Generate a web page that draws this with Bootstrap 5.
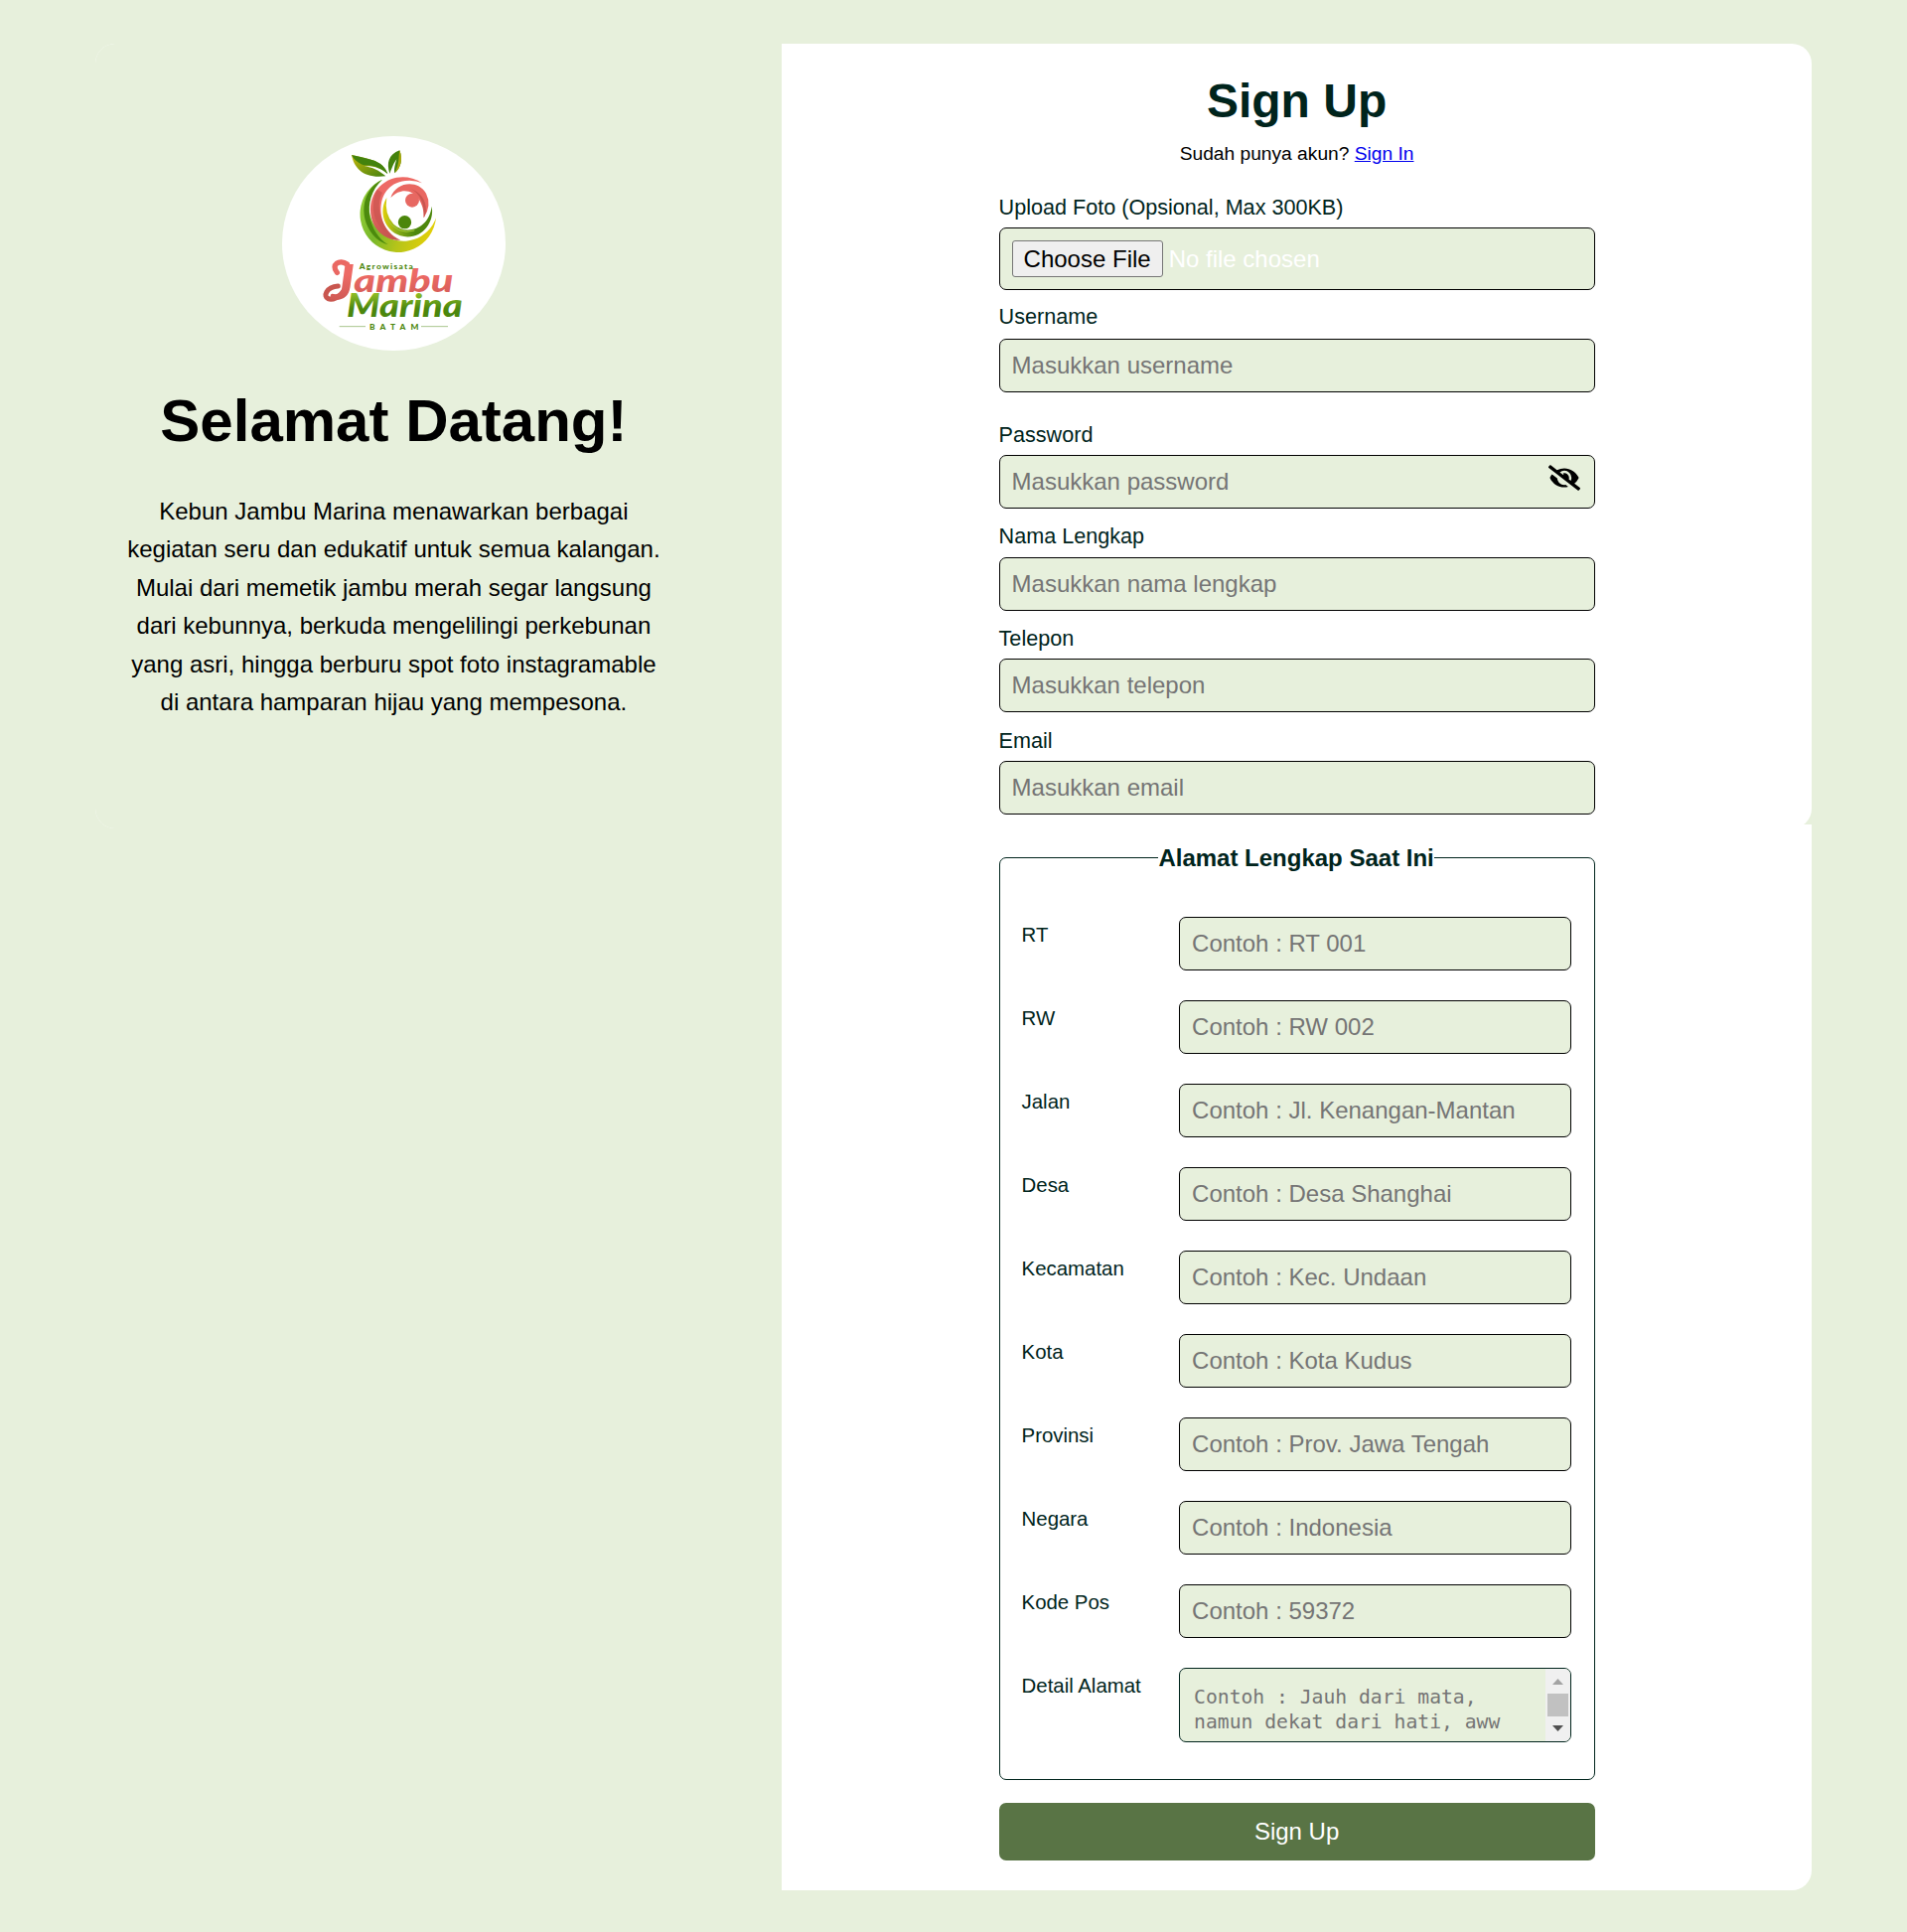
<!DOCTYPE html>
<html lang="id">
<head>
<meta charset="utf-8">
<meta name="viewport" content="width=device-width, initial-scale=1">
<title>Sign Up</title>
<link href="https://cdn.jsdelivr.net/npm/bootstrap@5.3.0/dist/css/bootstrap.min.css" rel="stylesheet">
<style>
  :root { --leaf: #e7f0dc; --ink: #00241c; }
  body { background: var(--leaf); font-family: "Liberation Sans", Arial, sans-serif; color: #000; line-height: 1.15; padding: 44px 0 41px; }
  .signup-shell { width: 1728px; }
  .welcome-frame { width: 691.2px; height: 789.5px; border-radius: 20px 0 0 20px; }
  .welcome { height: 100%; background: var(--leaf); border-radius: 20px 0 0 20px; padding: 93px 90.4px 0 0; }
  .welcome h1 { font-size: 60px; line-height: 70px; margin: 36px 0 37px; }
  .welcome p { font-size: 24px; line-height: 38.4px; white-space: nowrap; }
  .form-side { width: 1036.8px; }
  .account { height: 789.5px; margin-bottom: -3.5px; padding: 30px 218.4px 0; border-radius: 0 20px 20px 0; }
  .address { padding: 19px 218.4px 30.5px; border-radius: 0 0 20px 0; }
  .account h2 { font-size: 48px; line-height: 56px; color: var(--ink); }
  .login-hint { font-size: 19.2px; line-height: 22px; margin: 14px 0 30px; }
  .login-hint a { color: #00e; }
  .account .form-label { font-size: 21.6px; line-height: 25px; height: 25px; color: var(--ink); margin: 0 0 8.27px; }
  .field { margin-bottom: 15.4px; }
  .field-upload { margin-bottom: 14px; }
  .field-username { margin-bottom: 30px; }
  .account .field-username .form-label { margin-bottom: 9.5px; }
  .field-input, .field-input:focus { height: 54px; padding: 12px; font-size: 24px; line-height: 28px; background: var(--leaf); border: 1px solid #000; border-radius: 7px; }
  .field-input::placeholder, .detail-input::placeholder { color: #757575; opacity: 1; }
  .file-field { height: 63px; padding: 0 12px; background: var(--leaf); border: 1px solid #000; border-radius: 7px; font-size: 24px; gap: 6px; }
  .choose { height: 37px; padding: 1px 11px 0; background: #efefef; border: 1px solid #767676; border-radius: 3px; font-size: 24px; line-height: 34px; color: #000; }
  .eye { right: 15px; top: 10px; width: 32px; height: 26px; }
  .address fieldset { height: 942.5px; border: 1px solid var(--ink); border-radius: 7px; padding: 46px 23px 0 22px; }
  .address legend { float: none; width: auto; margin: 0 auto; padding: 2px 0 0; font-size: 24px; line-height: 26px; font-weight: 700; color: var(--ink); }
  .address-row { min-height: 54px; margin-bottom: 30px; }
  .address-row label { width: 158.5px; padding-top: 6px; font-size: 20.4px; line-height: 24px; color: var(--ink); }
  .detail-box { height: 75px; border: 1px solid var(--ink); border-radius: 7px; background: var(--leaf); overflow: hidden; }
  .detail-input { resize: none; border: 0; background: transparent; padding: 16px 0 0 14px; font-family: "DejaVu Sans Mono", monospace; font-size: 19.7px; line-height: 25px; overflow: hidden; outline: 0; }
  .submit { height: 58px; margin-top: 23px; background: #597445; border: 0; border-radius: 7px; font-size: 24px; color: #fff; }
</style>
</head>
<body>
<main class="signup-shell d-flex align-items-start mx-auto">
  <div class="welcome-frame bg-white">
  <section class="welcome text-center">
    <svg class="d-block mx-auto" width="225" height="216" viewBox="42 36 675 648">
      <defs>
        <linearGradient id="rim" x1="0" y1=".3" x2="1" y2=".6"><stop offset="0" stop-color="#91cc35"/><stop offset=".3" stop-color="#78b82a"/><stop offset=".6" stop-color="#b4c41a"/><stop offset="1" stop-color="#e3cf08"/></linearGradient>
        <linearGradient id="rose" x1="0" y1="0" x2="0" y2="1"><stop offset=".4" stop-color="#ed6a65"/><stop offset="1" stop-color="#c4544e"/></linearGradient>
        <linearGradient id="bowl" x1="0" y1="0" x2="1" y2="0"><stop offset="0" stop-color="#e3cf08"/><stop offset=".3" stop-color="#86ab18"/><stop offset=".65" stop-color="#4d870c"/></linearGradient>
        <linearGradient id="grass" x1="0" y1="0" x2="0" y2="1"><stop offset=".15" stop-color="#99c52b"/><stop offset=".6" stop-color="#4b870d"/></linearGradient>
        <linearGradient id="leafTone" x1="0" y1="0" x2="1" y2="1"><stop offset="0" stop-color="#c5b70b"/><stop offset="1" stop-color="#3f8010"/></linearGradient>
      </defs>
      <ellipse cx="379.5" cy="360" rx="337.5" ry="324" fill="#fff"/>
      <path fill="url(#leafTone)" d="M252 93C260 135 290 165 355 157C335 140 315 130 290 127C318 125 340 132 361 150C347 110 310 106 252 93Z"/>
      <path fill="#43820d" d="M252 93C310 106 347 110 361 150C337 130 318 123 290 124C275 119 260 109 252 93Z"/>
      <path fill="#43820d" d="M397 79C363 92 357 118 367 149C372 138 376 123 388 106C382 126 380 137 382 148C400 133 408 108 397 79Z"/>
      <path fill="#aaa80c" d="M397 79C393 99 398 119 382 148C400 133 408 108 397 79Z"/>
      <path fill="url(#rim)" d="M345 167A115 115 0 1 0 507 283A104 104 0 1 1 345 167Z"/>
      <path fill="#4c8a0d" d="M345 167C279 199 270 290 326 344Q343 359 362 363C307 332 276 232 345 167Z"/>
      <path fill="url(#rose)" d="M465 178C397 133 309 177 309 257C309 319 356 353 400 350C324 324 313 183 414 171Q443 168 465 178Z"/>
      <path fill="#c95650" opacity=".75" d="M330 197C303 240 315 330 400 350C346 326 320 255 345 207Z"/>
      <path fill="#e96761" d="M370 222C386 172 453 167 477 209Q495 244 470 283C474 225 421 171 370 222Z"/>
      <path fill="#c95650" d="M431 195C458 206 478 226 477 263Q474 276 470 283C473 239 458 209 431 195Z"/>
      <path fill="url(#bowl)" d="M358 222C332 265 351 320 399 337C457 354 504 302 494 248C487 314 419 339 379 302Q350 272 358 222Z"/>
      <path fill="none" stroke="#a6cc38" stroke-width="3" d="M356 284Q391 337 442 321"/>
      <circle cx="435" cy="230" r="21" fill="#e76862"/>
      <circle cx="412.500" cy="296" r="20" fill="#4b860a"/>
      <g font-family="Lato, sans-serif" font-style="italic" font-weight="900">
        <path d="M208 448C188 424 216 407 238 423" fill="none" stroke="#ea6863" stroke-width="16" stroke-linecap="round"/>
        <path d="M211 489C174 492 166 521 181 527C194 532 215 523 227 505" fill="none" stroke="#c9564f" stroke-width="15" stroke-linecap="round"/>
        <text fill="url(#rose)"><tspan x="190" y="530" font-size="150" textLength="70" lengthAdjust="spacingAndGlyphs">J</tspan><tspan x="259" y="508" font-size="98" textLength="300" lengthAdjust="spacingAndGlyphs">ambu</tspan></text>
        <text x="237" y="583" font-size="96" textLength="350" lengthAdjust="spacingAndGlyphs" fill="url(#grass)">Marina</text>
      </g>
      <text x="275" y="437" font-family="Lato, sans-serif" font-size="25" font-weight="900" textLength="162" fill="#4b860a">Agrowisata</text>
      <path d="M215 611H294M462 611H543" stroke="#a9c58c" stroke-width="3"/>
      <text x="306" y="621" font-family="Lato, sans-serif" font-size="25" font-weight="900" textLength="148" fill="#4b860a">BATAM</text>
    </svg>
    <h1 class="fw-bold">Selamat Datang!</h1>
    <p class="mb-0">Kebun Jambu Marina menawarkan berbagai<br>kegiatan seru dan edukatif untuk semua kalangan.<br>Mulai dari memetik jambu merah segar langsung<br>dari kebunnya, berkuda mengelilingi perkebunan<br>yang asri, hingga berburu spot foto instagramable<br>di antara hamparan hijau yang mempesona.</p>
  </section>
  </div>

  <form class="form-side">
    <section class="account bg-white">
      <h2 class="text-center fw-bold m-0">Sign Up</h2>
      <p class="login-hint text-center">Sudah punya akun? <a href="#">Sign In</a></p>
      <div class="field-upload">
        <label class="form-label d-block">Upload Foto (Opsional, Max 300KB)</label>
        <div class="file-field d-flex align-items-center"><button type="button" class="choose">Choose File</button><span class="text-white">No file chosen</span></div>
      </div>
      <div class="field-username">
        <label class="form-label d-block" for="username">Username</label>
        <input class="form-control field-input" id="username" placeholder="Masukkan username">
      </div>
      <div class="field">
        <label class="form-label d-block" for="password">Password</label>
        <div class="position-relative">
          <input type="password" class="form-control field-input" id="password" placeholder="Masukkan password">
          <svg class="eye position-absolute" viewBox="0 0 640 512"><path d="M320 400c-75.85 0-137.25-58.71-142.9-133.11L72.2 185.82c-13.79 17.3-26.48 35.59-36.72 55.59a32.35 32.35 0 0 0 0 29.19C89.71 376.41 197.07 448 320 448c26.91 0 52.87-4 77.89-10.46L346 397.39a144.13 144.13 0 0 1-26 2.61zm313.82 58.1l-110.55-85.44a331.25 331.25 0 0 0 81.25-102.07 32.35 32.35 0 0 0 0-29.19C550.29 135.59 442.93 64 320 64a308.15 308.15 0 0 0-147.32 37.7L45.46 3.37A16 16 0 0 0 23 6.18L3.37 31.45A16 16 0 0 0 6.18 53.9l588.36 454.73a16 16 0 0 0 22.46-2.81l19.64-25.27a16 16 0 0 0-2.82-22.45zm-183.72-142l-39.3-30.38A94.75 94.75 0 0 0 416 256a94.76 94.76 0 0 0-121.31-92.21A47.65 47.65 0 0 1 304 192a46.64 46.64 0 0 1-1.54 10l-73.61-56.89A142.31 142.31 0 0 1 320 112a143.92 143.92 0 0 1 144 144c0 21.63-5.29 41.79-13.9 60.11z"/></svg>
        </div>
      </div>
      <div class="field">
        <label class="form-label d-block" for="nama">Nama Lengkap</label>
        <input class="form-control field-input" id="nama" placeholder="Masukkan nama lengkap">
      </div>
      <div class="field">
        <label class="form-label d-block" for="telepon">Telepon</label>
        <input class="form-control field-input" id="telepon" placeholder="Masukkan telepon">
      </div>
      <div>
        <label class="form-label d-block" for="email">Email</label>
        <input class="form-control field-input" id="email" placeholder="Masukkan email">
      </div>
    </section>

    <section class="address bg-white">
      <fieldset>
        <legend>Alamat Lengkap Saat Ini</legend>
        <div class="address-row d-flex"><label class="flex-shrink-0">RT</label><input class="form-control field-input" placeholder="Contoh : RT 001"></div>
        <div class="address-row d-flex"><label class="flex-shrink-0">RW</label><input class="form-control field-input" placeholder="Contoh : RW 002"></div>
        <div class="address-row d-flex"><label class="flex-shrink-0">Jalan</label><input class="form-control field-input" placeholder="Contoh : Jl. Kenangan-Mantan"></div>
        <div class="address-row d-flex"><label class="flex-shrink-0">Desa</label><input class="form-control field-input" placeholder="Contoh : Desa Shanghai"></div>
        <div class="address-row d-flex"><label class="flex-shrink-0">Kecamatan</label><input class="form-control field-input" placeholder="Contoh : Kec. Undaan"></div>
        <div class="address-row d-flex"><label class="flex-shrink-0">Kota</label><input class="form-control field-input" placeholder="Contoh : Kota Kudus"></div>
        <div class="address-row d-flex"><label class="flex-shrink-0">Provinsi</label><input class="form-control field-input" placeholder="Contoh : Prov. Jawa Tengah"></div>
        <div class="address-row d-flex"><label class="flex-shrink-0">Negara</label><input class="form-control field-input" placeholder="Contoh : Indonesia"></div>
        <div class="address-row d-flex"><label class="flex-shrink-0">Kode Pos</label><input class="form-control field-input" placeholder="Contoh : 59372"></div>
        <div class="address-row d-flex mb-0"><label class="flex-shrink-0">Detail Alamat</label>
          <div class="detail-box d-flex flex-grow-1">
            <textarea class="detail-input flex-grow-1" placeholder="Contoh : Jauh dari mata, namun dekat dari hati, aww"></textarea>
            <svg class="flex-shrink-0" width="25" height="73" viewBox="0 0 25 73"><path fill="#f0f0f0" d="M0 0h25v73H0z"/><path fill="#a3a3a3" d="M7 16l5.500-6 5.500 6z"/><path fill="#c1c1c1" d="M2 25h21v23H2z"/><path fill="#505050" d="M7 57h11l-5.500 6z"/></svg>
          </div>
        </div>
      </fieldset>
      <button type="button" class="submit btn w-100 d-block">Sign Up</button>
    </section>
  </form>
</main>
<script src="https://cdn.jsdelivr.net/npm/bootstrap@5.3.0/dist/js/bootstrap.bundle.min.js"></script>
</body>
</html>
